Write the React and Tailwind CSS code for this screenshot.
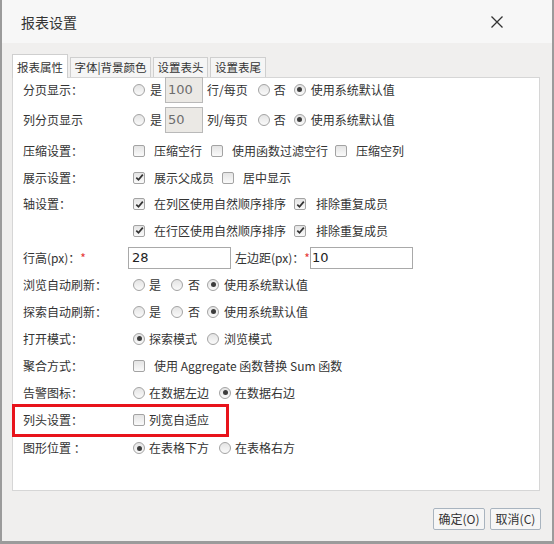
import React from "react";

function Radio({ checked, className = "" }) {
  return (
    <span
      className={`inline-flex h-[12px] w-[12px] shrink-0 items-center justify-center rounded-full border border-[#a3a3a3] bg-gradient-to-b from-[#e4e4e4] to-[#fafafa] ${className}`}
    >
      {checked && <span className="h-[5px] w-[5px] rounded-full bg-[#3c3c3c]" />}
    </span>
  );
}

function Check({ checked, className = "" }) {
  return (
    <span
      className={`inline-flex h-[12px] w-[12px] shrink-0 items-center justify-center rounded-[2px] border border-[#a3a3a3] bg-gradient-to-b from-[#e4e4e4] to-[#fafafa] ${className}`}
    >
      {checked && (
        <svg width="9" height="9" viewBox="0 0 9 9">
          <path d="M1.3 4.6 L3.5 6.8 L7.8 1.6" fill="none" stroke="#333" strokeWidth="1.7" />
        </svg>
      )}
    </span>
  );
}

function T({ children, className = "" }) {
  return <span className={`whitespace-nowrap ${className}`}>{children}</span>;
}

function Row({ h, label, children, labelW = "w-[110px]" }) {
  return (
    <div className={`flex items-center ${h}`}>
      <span className={`${labelW} shrink-0 whitespace-nowrap`}>{label}</span>
      <div className="flex items-center">{children}</div>
    </div>
  );
}

export default function App() {
  return (
    <div className="flex h-[544px] w-[554px] bg-[#9b9b9b] font-['Noto_Sans_CJK_SC',sans-serif] text-[12px] leading-none text-[#333]">
      <div className="ml-[2px] flex h-[541px] w-[550px] flex-col bg-[#f0efee]">
        {/* header */}
        <div className="flex h-[43px] shrink-0 items-center justify-between bg-[#f7f7f7] pl-[19px] pr-[49px]">
          <span className="text-[14px] text-[#333]">报表设置</span>
          <svg width="12" height="12" viewBox="0 0 12 12" className="mt-[1px]">
            <path d="M0.5 0.5 L11.5 11.5 M11.5 0.5 L0.5 11.5" stroke="#333" strokeWidth="1.3" />
          </svg>
        </div>

        {/* body */}
        <div className="flex flex-col pl-[10px] pt-[11px]">
          {/* tabs */}
          <div className="flex h-[23px] items-end gap-[2px] text-[11.5px]">
            <div className="relative z-10 -mb-px flex h-[24px] w-[56px] items-center justify-center border border-b-0 border-[#cfcfcf] bg-white pt-[2px]">
              报表属性
            </div>
            <div className="flex h-[20px] w-[81px] items-center justify-center border border-b-0 border-[#cfcfcf] bg-[#f5f5f5] pt-[1px]">
              字体|背景颜色
            </div>
            <div className="flex h-[20px] w-[55px] items-center justify-center border border-b-0 border-[#cfcfcf] bg-[#f5f5f5] pt-[1px]">
              设置表头
            </div>
            <div className="flex h-[20px] w-[56px] items-center justify-center border border-b-0 border-[#cfcfcf] bg-[#f5f5f5] pt-[1px]">
              设置表尾
            </div>
          </div>

          {/* panel */}
          <div className="flex h-[414px] w-[528px] flex-col border border-[#d6d6d6] bg-white pl-[10px]">
            <Row h="h-[23px]" label="分页显示：">
              <Radio />
              <T className="ml-[5px]">是</T>
              <div className="ml-[3px] flex h-[26px] w-[38px] items-center border border-[#b9b9b9] bg-[#ebe9e5] pl-[2px] font-['DejaVu_Sans',sans-serif] text-[13px] text-[#6d6d6d]">
                100
              </div>
              <T className="ml-[4px]">行/每页</T>
              <Radio className="ml-[10px]" />
              <T className="ml-[4px]">否</T>
              <Radio checked className="ml-[8px]" />
              <T className="ml-[5px]">使用系统默认值</T>
            </Row>
            <Row h="h-[37px]" label="列分页显示">
              <Radio />
              <T className="ml-[5px]">是</T>
              <div className="ml-[3px] flex h-[26px] w-[38px] items-center border border-[#b9b9b9] bg-[#ebe9e5] pl-[2px] font-['DejaVu_Sans',sans-serif] text-[13px] text-[#6d6d6d]">
                50
              </div>
              <T className="ml-[4px]">列/每页</T>
              <Radio className="ml-[10px]" />
              <T className="ml-[4px]">否</T>
              <Radio checked className="ml-[8px]" />
              <T className="ml-[5px]">使用系统默认值</T>
            </Row>
            <Row h="h-[26px]" label="压缩设置：">
              <Check />
              <T className="ml-[9px]">压缩空行</T>
              <Check className="ml-[9px]" />
              <T className="ml-[9px]">使用函数过滤空行</T>
              <Check className="ml-[7px]" />
              <T className="ml-[9px]">压缩空列</T>
            </Row>
            <Row h="h-[27px]" label="展示设置：">
              <Check checked />
              <T className="ml-[9px]">展示父成员</T>
              <Check className="ml-[8px]" />
              <T className="ml-[9px]">居中显示</T>
            </Row>
            <Row h="h-[26px]" label="轴设置：">
              <Check checked />
              <T className="ml-[9px]">在列区使用自然顺序排序</T>
              <Check checked className="ml-[8px]" />
              <T className="ml-[10px]">排除重复成员</T>
            </Row>
            <Row h="h-[27px]" label="">
              <Check checked />
              <T className="ml-[9px]">在行区使用自然顺序排序</T>
              <Check checked className="ml-[8px]" />
              <T className="ml-[10px]">排除重复成员</T>
            </Row>
            <div className="flex h-[27px] items-center">
              <T className="w-[105px] shrink-0">
                行高(px)：<span className="text-[#e53935]">*</span>
              </T>
              <div className="flex h-[22px] w-[103px] items-center border border-[#a9a9a9] pl-[3px] font-['DejaVu_Sans',sans-serif] text-[13px] text-[#222]">
                28
              </div>
              <T className="ml-[4px]">
                左边距(px)：<span className="text-[#e53935]">*</span>
              </T>
              <div className="flex h-[22px] w-[103px] items-center border border-[#a9a9a9] pl-[1px] font-['DejaVu_Sans',sans-serif] text-[13px] text-[#222]">
                10
              </div>
            </div>
            <Row h="h-[27px]" label="浏览自动刷新：">
              <Radio />
              <T className="ml-[4px]">是</T>
              <Radio className="ml-[10px]" />
              <T className="ml-[5px]">否</T>
              <Radio checked className="ml-[7px]" />
              <T className="ml-[5px]">使用系统默认值</T>
            </Row>
            <Row h="h-[27px]" label="探索自动刷新：">
              <Radio />
              <T className="ml-[4px]">是</T>
              <Radio className="ml-[10px]" />
              <T className="ml-[5px]">否</T>
              <Radio checked className="ml-[7px]" />
              <T className="ml-[5px]">使用系统默认值</T>
            </Row>
            <Row h="h-[27px]" label="打开模式：">
              <Radio checked />
              <T className="ml-[4px]">探索模式</T>
              <Radio className="ml-[10px]" />
              <T className="ml-[5px]">浏览模式</T>
            </Row>
            <Row h="h-[27px]" label="聚合方式：">
              <Check />
              <T className="ml-[9px]">使用 Aggregate 函数替换 Sum 函数</T>
            </Row>
            <Row h="h-[27px]" label="告警图标：">
              <Radio />
              <T className="ml-[4px]">在数据左边</T>
              <Radio checked className="ml-[10px]" />
              <T className="ml-[4px]">在数据右边</T>
            </Row>
            <div className="relative flex h-[28px] items-center">
              <span className="w-[110px] shrink-0 whitespace-nowrap">列头设置：</span>
              <Check />
              <T className="ml-[4px]">列宽自适应</T>
              <div className="absolute left-[-11px] top-[-2px] h-[33px] w-[217px] border-[3px] border-[#e8131b]" />
            </div>
            <Row h="h-[28px]" label="图形位置 ：">
              <Radio checked />
              <T className="ml-[4px]">在表格下方</T>
              <Radio className="ml-[10px]" />
              <T className="ml-[4px]">在表格右方</T>
            </Row>
          </div>
        </div>

        {/* footer */}
        <div className="flex justify-end gap-[5px] pr-[11px] pt-[17px]">
          <button className="flex h-[22px] w-[52px] items-center justify-center rounded-[2px] border border-[#a9b4bf] bg-[#f6f6f6] text-[12px] text-[#333]">
            确定(O)
          </button>
          <button className="flex h-[22px] w-[51px] items-center justify-center rounded-[2px] border border-[#a9b4bf] bg-[#f6f6f6] text-[12px] text-[#333]">
            取消(C)
          </button>
        </div>
      </div>
    </div>
  );
}
